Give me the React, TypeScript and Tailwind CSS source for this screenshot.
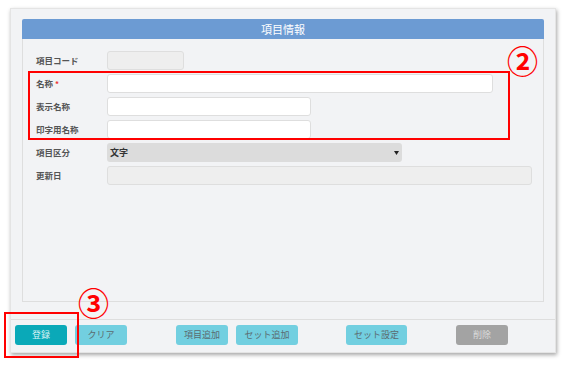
import React from "react";

const rows: { label: string; required?: boolean; kind: "disabled" | "input" | "select"; width: string }[] = [
  { label: "項目コード", kind: "disabled", width: "w-[77px]" },
  { label: "名称", required: true, kind: "input", width: "w-[386px]" },
  { label: "表示名称", kind: "input", width: "w-[204px]" },
  { label: "印字用名称", kind: "input", width: "w-[204px]" },
  { label: "項目区分", kind: "select", width: "w-[295px]" },
  { label: "更新日", kind: "disabled", width: "w-[425px]" },
];

function Field({ kind, width }: { kind: string; width: string }) {
  if (kind === "select") {
    return (
      <div className={`${width} h-[19px] rounded-[3px] bg-[#dcdcdc] flex items-center justify-between pl-[3px] pr-[3px]`}>
        <span className="text-[9px] font-bold text-[#333]">文字</span>
        <svg width="5" height="4" viewBox="0 0 5 4">
          <path d="M0 0 H5 L2.5 4 Z" fill="#222" />
        </svg>
      </div>
    );
  }
  const bg = kind === "disabled" ? "bg-[#eeeeee]" : "bg-white";
  return <div className={`${width} h-[19px] rounded-[3px] border border-[#dedede] ${bg}`} />;
}

export default function App() {
  return (
    <div className="relative w-[566px] h-[366px] bg-white overflow-hidden" style={{ fontFamily: '"Noto Sans CJK JP", "Noto Sans", sans-serif' }}>
      {/* Window */}
      <div className="absolute left-[10px] top-[8px] w-[546px] h-[345px] bg-[#f2f3f5] border border-[#e4e4e4] shadow-[1px_2px_4px_rgba(0,0,0,0.35)] flex flex-col">
        <div className="px-[11px] pt-[10px] flex-1 flex flex-col">
          <div className="h-[20px] bg-[#6c9bd3] flex items-center justify-center rounded-t-[2px]">
            <span className="text-[11px] text-white">項目情報</span>
          </div>
          <div className="h-[263px] border border-t-0 border-[#dedede] pt-[12px] flex flex-col gap-[4px]">
            {rows.map((r) => (
              <div key={r.label} className="flex items-center h-[19px]">
                <div className="w-[84px] pl-[13px] text-[8.5px] font-bold text-[#555] flex items-center">
                  {r.label}
                  {r.required && <span className="text-[#e33] ml-[2px] text-[8px]">*</span>}
                </div>
                <Field kind={r.kind} width={r.width} />
              </div>
            ))}
          </div>
        </div>
        {/* Footer */}
        <div className="h-[33px] border-t border-[#dedede] flex items-start pt-[5px] pl-[4px]">
          <button className="w-[52px] h-[20px] rounded-[3px] bg-[#0aa9b8] text-[9px] text-[#d8f2f5]">登録</button>
          <button className="ml-[8px] w-[52px] h-[20px] rounded-[3px] bg-[#72cfe0] text-[9px] text-[#5b6b70]">クリア</button>
          <button className="ml-[49px] w-[52px] h-[20px] rounded-[3px] bg-[#72cfe0] text-[9px] text-[#5b6b70]">項目追加</button>
          <button className="ml-[8px] w-[62px] h-[20px] rounded-[3px] bg-[#72cfe0] text-[9px] text-[#5b6b70]">セット追加</button>
          <button className="ml-[48px] w-[61px] h-[20px] rounded-[3px] bg-[#72cfe0] text-[9px] text-[#5b6b70]">セット設定</button>
          <button className="ml-[49px] w-[52px] h-[20px] rounded-[3px] bg-[#a3a3a3] text-[9px] text-[#dcdcdc]">削除</button>
        </div>
      </div>

      {/* Annotations */}
      <div className="absolute left-[28px] top-[71px] w-[482px] h-[69px] border-2 border-[#ff0000]" />
      <div className="absolute left-[507px] top-[44px] text-[31px] leading-none font-bold text-[#ff0000]">②</div>
      <div className="absolute left-[4px] top-[312px] w-[75px] h-[46px] border-2 border-[#ff0000]" />
      <div className="absolute left-[78px] top-[286px] text-[31px] leading-none font-bold text-[#ff0000]">③</div>
    </div>
  );
}
